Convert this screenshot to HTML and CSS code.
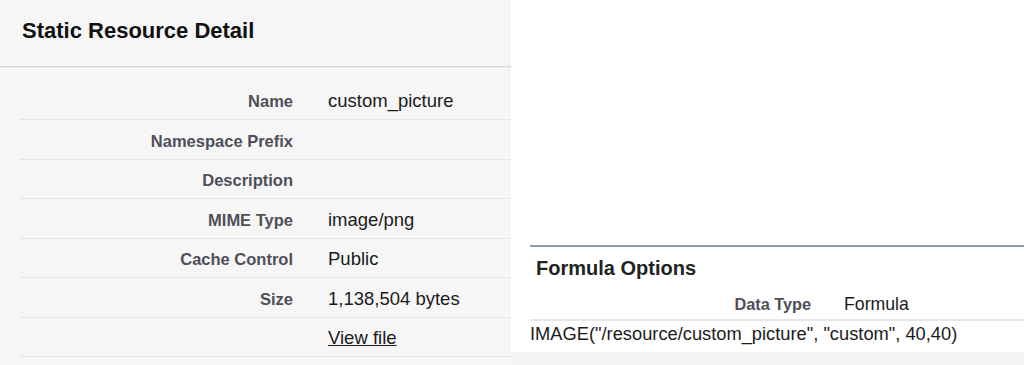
FILE: index.html
```html
<!DOCTYPE html>
<html lang="en">
<head>
    <meta charset="UTF-8">
    <meta name="viewport" content="width=device-width, initial-scale=1.0">
    <title>Static Resource Detail</title>
    <link rel="stylesheet" href="styles.css">
</head>
<body>
    <!-- Static resource detail panel -->
    <div class="detail-panel">
        <div class="detail-header">
            <h2>Static Resource Detail</h2>
        </div>
        <div class="detail-row">
            <div class="label">Name</div>
            <div class="value">custom_picture</div>
        </div>
        <div class="detail-row">
            <div class="label">Namespace Prefix</div>
            <div class="value"></div>
        </div>
        <div class="detail-row">
            <div class="label">Description</div>
            <div class="value"></div>
        </div>
        <div class="detail-row">
            <div class="label">MIME Type</div>
            <div class="value">image/png</div>
        </div>
        <div class="detail-row">
            <div class="label">Cache Control</div>
            <div class="value">Public</div>
        </div>
        <div class="detail-row">
            <div class="label">Size</div>
            <div class="value">1,138,504 bytes</div>
        </div>
        <div class="detail-row">
            <div class="label"></div>
            <div class="value"><a href="#">View file</a></div>
        </div>
    </div>

    <!-- Formula options panel -->
    <div class="formula-panel">
        <div class="formula-section">
            <h3>Formula Options</h3>
            <div class="formula-row">
                <div class="label">Data Type</div>
                <div class="value">Formula</div>
            </div>
            <div class="formula-text">IMAGE("/resource/custom_picture", "custom", 40,40)</div>
        </div>
        <div class="next-band"></div>
    </div>
</body>
</html>
```

FILE: styles.css
```css
body {
    font-family: "Liberation Sans", Arial, Helvetica, sans-serif;
    margin: 0;
    padding: 0;
    display: flex;
    height: 100vh;
    overflow: hidden;
    background: #fff;
    color: #1b1b1b;
}

.label {
    font-weight: 700;
    color: #4f4f59;
    text-align: right;
}

/* left panel */

.detail-panel {
    width: 511px;
    flex-shrink: 0;
    background: #f6f6f6;
}

.detail-header {
    height: 67px;
    border-bottom: 1px solid #d9d9d9;
    box-shadow: 0 1px 0 #ececec;
    padding-left: 22px;
    box-sizing: border-box;
}

.detail-header h2 {
    margin: 0;
    padding-top: 18px;
    font-size: 22px;
    line-height: 26px;
    font-weight: 700;
    color: #111;
}

.detail-row {
    margin-left: 20px;
    height: 38.5px;
    border-bottom: 1px solid #e6e6e6;
    display: grid;
    grid-template-columns: 273px 1fr;
    column-gap: 35px;
    align-items: end;
    padding-bottom: 8px;
    box-sizing: content-box;
    height: 30.5px;
}

.detail-row:nth-child(2) {
    height: 44px;
}

.detail-row .label {
    font-size: 16.5px;
    line-height: 20px;
}

.detail-row .value {
    font-size: 18.5px;
    line-height: 20px;
}

.detail-row a {
    color: #1b1b1b;
    text-decoration: underline;
}

/* right panel */

.formula-panel {
    flex: 1;
    display: flex;
    flex-direction: column;
}

.formula-section {
    margin-top: auto;
    margin-left: 19px;
    border-top: 2px solid #8f9ab1;
    padding-bottom: 7px;
}

.formula-section h3 {
    margin: 9px 0 0 6px;
    font-size: 20px;
    line-height: 24px;
    font-weight: 700;
    color: #222;
}

.formula-row {
    height: 34px;
    padding-bottom: 5px;
    display: grid;
    grid-template-columns: 281px 1fr;
    column-gap: 33px;
    align-items: end;
    border-bottom: 2px solid #e6e6e6;
}

.formula-row .label {
    font-size: 16.3px;
    line-height: 20px;
}

.formula-row .value {
    font-size: 17.7px;
    line-height: 20px;
}

.formula-text {
    margin-top: 2px;
    font-size: 18.3px;
    line-height: 22px;
    white-space: nowrap;
}

.next-band {
    height: 13px;
    background: #f4f4f4;
}
```
